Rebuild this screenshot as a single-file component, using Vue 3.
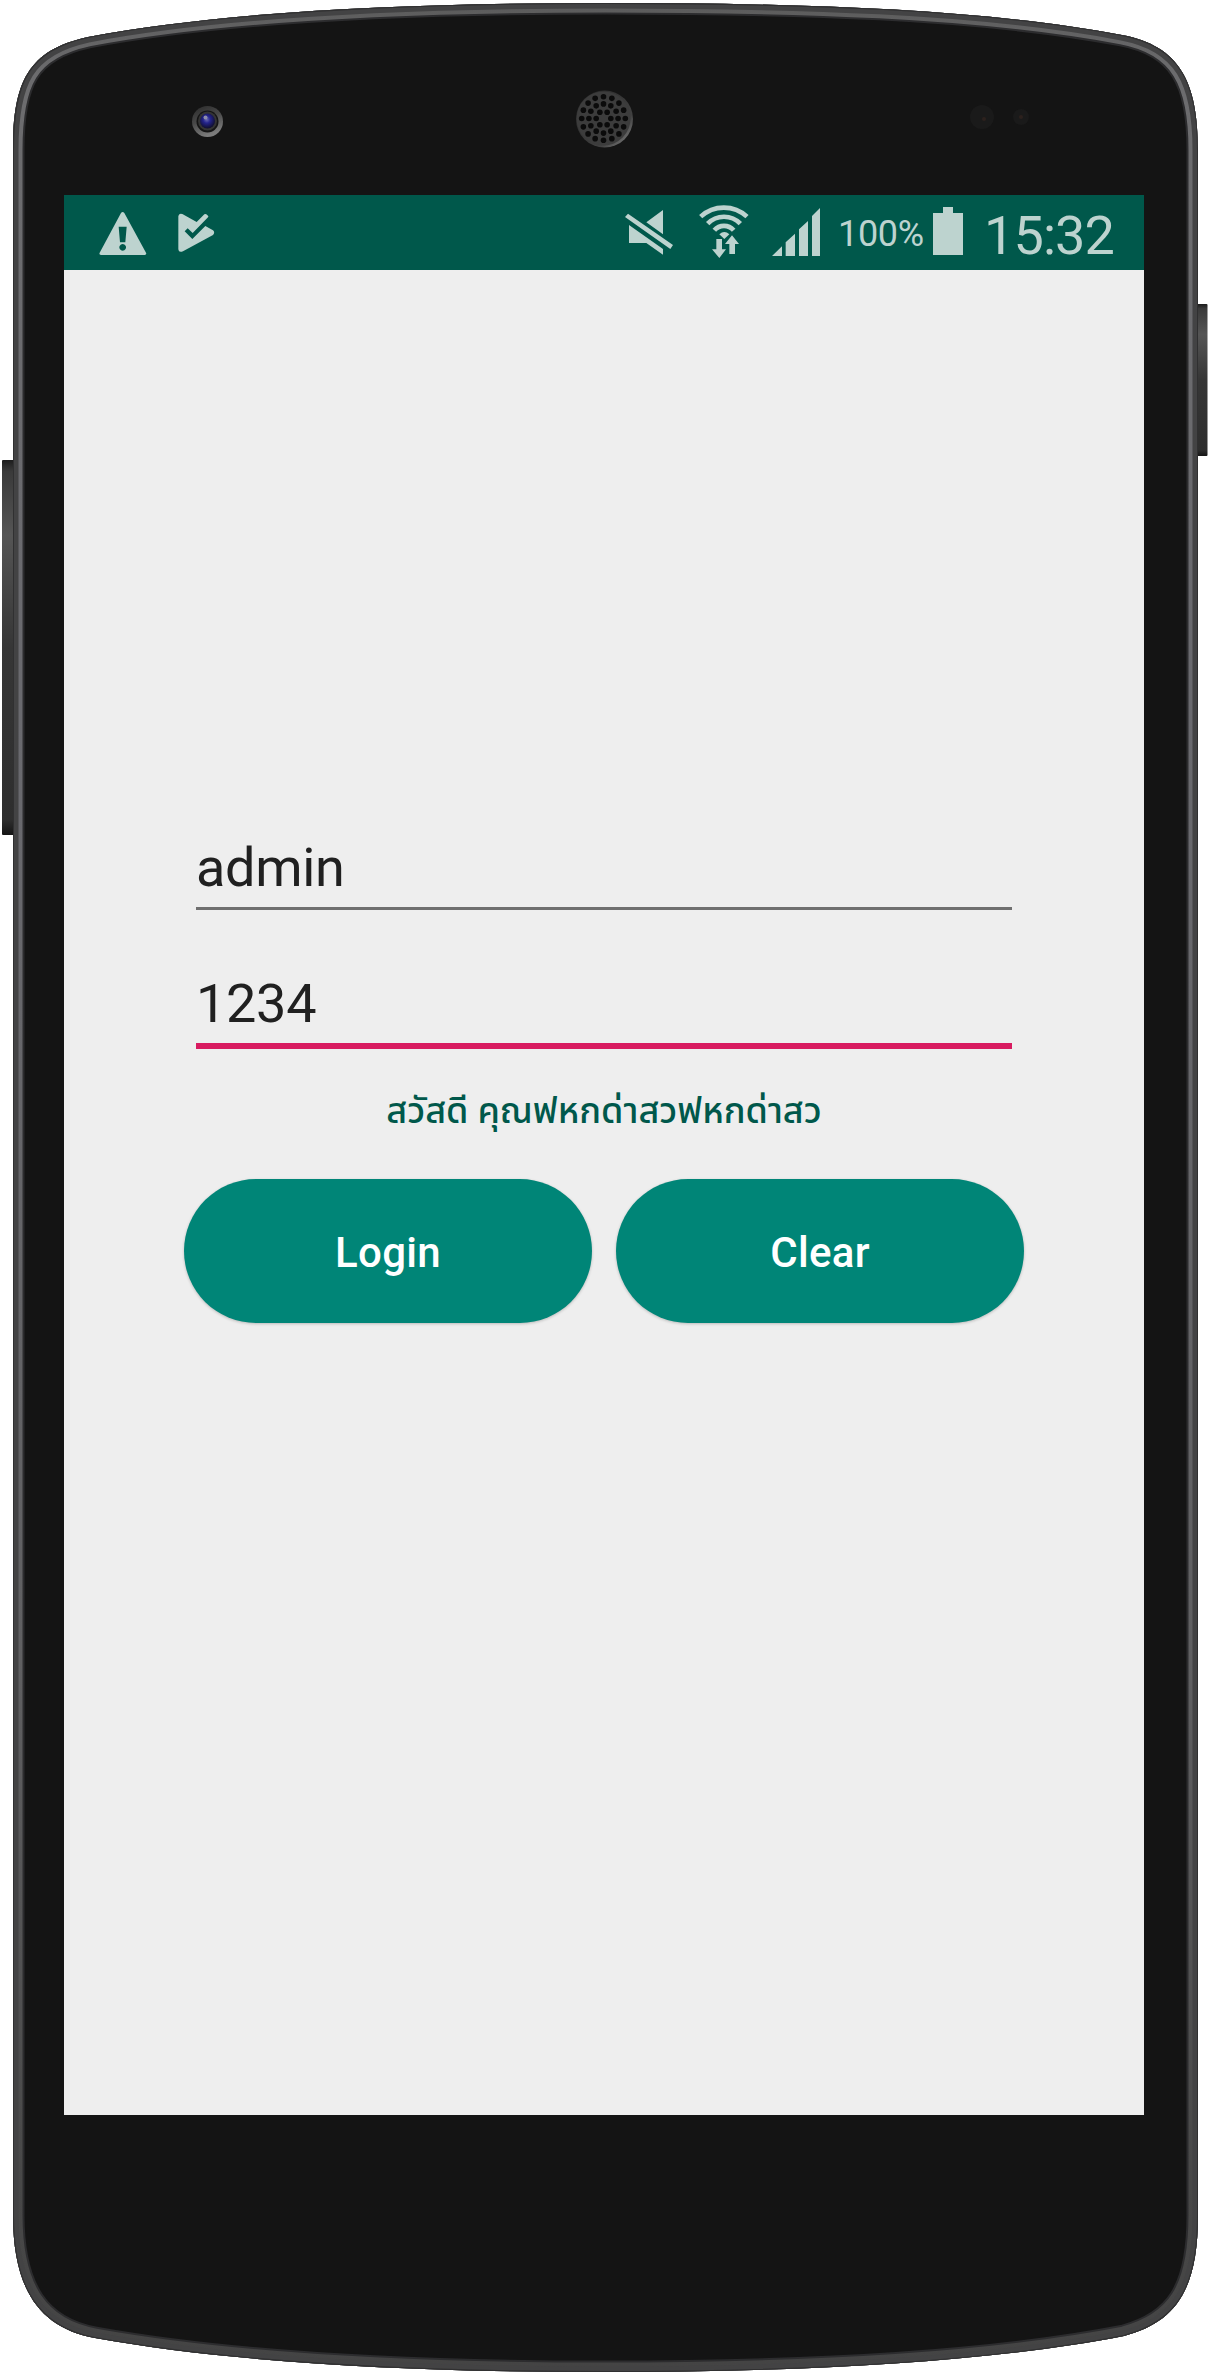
<script setup>
import { ref } from 'vue'

const username = ref('admin')
const password = ref('1234')

const outline =
  'M13 300 V150 C13 82 28 50 88 37 C230 10 420 3 605 3 C790 3 980 8 1122 35 C1180 46 1198 82 1198 150 V2215 C1198 2290 1176 2322 1124 2336 C980 2364 790 2372 605 2372 C420 2372 240 2364 95 2338 C40 2328 13 2290 13 2215 Z'

const rings = [
  { count: 6, radius: 7.3 },
  { count: 12, radius: 14.6 },
  { count: 16, radius: 21.8 },
]
const holes = rings.flatMap(({ count, radius }) =>
  Array.from({ length: count }, (_, i) => {
    const a = (i * 2 * Math.PI) / count
    return { x: 603.5 + radius * Math.cos(a), y: 118.5 + radius * Math.sin(a) }
  }),
)
</script>

<template>
  <div class="phone">
    <svg class="shell" viewBox="0 0 1210 2375" width="1210" height="2375" aria-hidden="true">
      <defs>
        <clipPath id="body"><path :d="outline" /></clipPath>
        <linearGradient id="shine" x1="0" y1="0" x2="0" y2="1">
          <stop offset="0" stop-color="#5b5b5b" />
          <stop offset="0.03" stop-color="#6c6c6e" />
          <stop offset="0.3" stop-color="#6a6a6f" />
          <stop offset="0.7" stop-color="#606062" />
          <stop offset="0.92" stop-color="#484848" />
          <stop offset="1" stop-color="#444" />
        </linearGradient>
        <linearGradient id="key" x1="0" y1="0" x2="0" y2="1">
          <stop offset="0" stop-color="#1c1c1c" />
          <stop offset="0.03" stop-color="#3a3a3a" />
          <stop offset="0.2" stop-color="#555" />
          <stop offset="0.5" stop-color="#363636" />
          <stop offset="0.96" stop-color="#2e2e2e" />
          <stop offset="1" stop-color="#151515" />
        </linearGradient>
        <linearGradient id="lensRim" x1="0" y1="0" x2="0.4" y2="1">
          <stop offset="0" stop-color="#2a2a2a" />
          <stop offset="0.5" stop-color="#484848" />
          <stop offset="1" stop-color="#7c7c7c" />
        </linearGradient>
        <radialGradient id="lens" cx="0.45" cy="0.4" r="0.6">
          <stop offset="0" stop-color="#6a6ab0" />
          <stop offset="0.4" stop-color="#23238c" />
          <stop offset="1" stop-color="#100f2c" />
        </radialGradient>
        <linearGradient id="grille" x1="0" y1="0" x2="1" y2="1">
          <stop offset="0" stop-color="#262626" />
          <stop offset="0.7" stop-color="#404040" />
          <stop offset="1" stop-color="#8a8a8a" />
        </linearGradient>
      </defs>
      <rect x="2" y="460" width="14" height="375" rx="1" fill="url(#key)" />
      <rect x="1195" y="304" width="12.500" height="152" rx="1" fill="url(#key)" />
      <g clip-path="url(#body)" fill="none">
        <path :d="outline" fill="#141414" />
        <path :d="outline" stroke="#2c2c2e" stroke-width="23" />
        <path :d="outline" stroke="url(#shine)" stroke-width="19" />
        <path :d="outline" stroke="#434344" stroke-width="11" />
        <path :d="outline" stroke="#303031" stroke-width="2" />
      </g>
      <circle cx="207.500" cy="121.500" r="15.500" fill="url(#lensRim)" />
      <circle cx="207.500" cy="121.500" r="11" fill="#151515" />
      <circle cx="207.500" cy="121" r="9.500" fill="#343434" />
      <circle cx="207.500" cy="121" r="7.500" fill="url(#lens)" />
      <circle cx="205.500" cy="117.500" r="2" fill="#8e8eaa" />
      <circle cx="604.500" cy="119" r="28.500" fill="url(#grille)" />
      <circle cx="603.500" cy="118.500" r="27" fill="#3c3c3c" />
      <circle v-for="(h, i) in holes" :key="i" :cx="h.x" :cy="h.y" r="2.800" fill="#0b0b0b" />
      <circle cx="982" cy="117" r="12" fill="#1a1a1a" />
      <circle cx="984" cy="119" r="2" fill="#2c211d" />
      <circle cx="1021" cy="117" r="8" fill="#1a1a1a" />
      <circle cx="1021" cy="117" r="2" fill="#2c211d" />
    </svg>

    <main class="screen">
      <header class="status">
        <svg viewBox="118 15 144 225" width="48" height="75" class="warn">
          <path fill-rule="evenodd" d="M184 69Q189 63 194 69L259 188Q262 195 255 195H124Q117 195 120 188ZM177 110H201L197 157H181ZM189 162a10 10 0 1 0 .1 0Z" />
        </svg>
        <svg viewBox="353 15 111 225" width="37" height="75" class="play">
          <path d="M354 79Q355 68 366 72L409 96L432 73Q435 71 438 73L443 77Q445 80 443 82L397 129L382 115L373 124L396 147L435 108L458 121Q465 127 458 135L368 184Q355 189 354 178Z" />
        </svg>
        <svg viewBox="75 15 144 225" width="48" height="75" class="mute">
          <path d="M84 71L219 165L211 177L75 81ZM189 60V133L139 97ZM87 105L189 177V194L139 159H87Z" />
        </svg>
        <svg viewBox="297 15 150 225" width="50" height="75" class="wifi">
          <g class="arcs">
            <path d="M302 80A102 102 0 0 1 441 80" />
            <path d="M323 101A68 68 0 0 1 421 101" />
            <path d="M343 121A38 38 0 0 1 401 121" />
          </g>
          <path d="M358 133Q373 119 388 133L373 147Z" />
          <path class="gap" d="M349 147H366V178H378L358 204L336 178H349ZM396 136L417 162H405V192H388V162H375Z" />
        </svg>
        <svg viewBox="516 15 144 225" width="48" height="75" class="signal">
          <path d="M516 198L546 169V198ZM557 198V157L585 131V198ZM597 198V118L624 93V198ZM636 198V78L660 54V198Z" />
        </svg>
        <span class="percent">100%</span>
        <svg viewBox="159 15 90 225" width="30" height="75" class="battery">
          <path d="M189 51h30v18h30v126h-90v-126h30z" />
        </svg>
        <span class="clock">15:32</span>
      </header>

      <form class="login" @submit.prevent>
        <input v-model="username" class="field" type="text" />
        <input v-model="password" class="field active" type="text" />
        <p class="greeting">สวัสดี คุณฟหกด่าสวฟหกด่าสว</p>
        <div class="actions">
          <button type="submit">Login</button>
          <button type="button">Clear</button>
        </div>
      </form>
    </main>
  </div>
</template>

<style>
body {
  background: #fff;
}
</style>

<style scoped>
.phone {
  position: relative;
  box-sizing: border-box;
  width: 1210px;
  height: 2375px;
  padding: 195px 66px 260px 64px;
  font-family: Roboto, "Noto Sans Thai", "Noto Sans", sans-serif;
}
.shell {
  position: absolute;
  inset: 0;
}
.screen {
  position: relative;
  width: 1080px;
  height: 1920px;
  background: #eee;
}
.status {
  display: flex;
  align-items: center;
  height: 75px;
  background: #00584b;
  color: #bdd3cf;
}
.status svg {
  flex: none;
  fill: #bdd3cf;
}
.warn {
  margin-left: 35.300px;
}
.play {
  margin-left: 30.400px;
}
.mute {
  margin-left: 410.300px;
}
.wifi {
  margin-left: 26px;
}
.arcs {
  fill: none;
  stroke: #bdd3cf;
  stroke-width: 14;
}
.gap {
  stroke: #00584b;
  stroke-width: 4;
  paint-order: stroke;
}
.signal {
  margin-left: 23px;
}
.percent {
  width: 95px;
  margin-left: 18px;
  padding-top: 4px;
  font-size: 36px;
  line-height: 75px;
  letter-spacing: -0.3px;
}
.clock {
  margin-left: 21px;
  padding-top: 5px;
  font-size: 54px;
  line-height: 75px;
  letter-spacing: -0.9px;
}
.login {
  display: flex;
  flex-direction: column;
  width: 840px;
  margin: 0 auto;
  padding-top: 550px;
}
.field {
  box-sizing: border-box;
  height: 90px;
  margin: 0 12px;
  padding: 8px 0 0;
  border: 0;
  border-bottom: 3px solid #6f6f6f;
  outline: 0;
  background: transparent;
  color: #202020;
  font: 400 54px/78px Roboto, sans-serif;
  letter-spacing: -0.3px;
}
.field.active {
  height: 93px;
  margin-top: 46px;
  border-bottom: 6px solid #d81b60;
}
.greeting {
  margin: 32px 0 0;
  height: 60px;
  color: #00584b;
  font-size: 36px;
  font-weight: 500;
  line-height: 60px;
  text-align: center;
  white-space: nowrap;
}
.actions {
  display: flex;
  gap: 24px;
  margin-top: 38px;
}
.actions button {
  flex: 1;
  height: 144px;
  padding: 3px 0 0;
  border: 0;
  border-radius: 72px;
  background: #008577;
  box-shadow: 0 1px 3px rgba(0, 0, 0, 0.22);
  color: #fff;
  font: 500 42px/141px Roboto, sans-serif;
  letter-spacing: 0.3px;
}
</style>
